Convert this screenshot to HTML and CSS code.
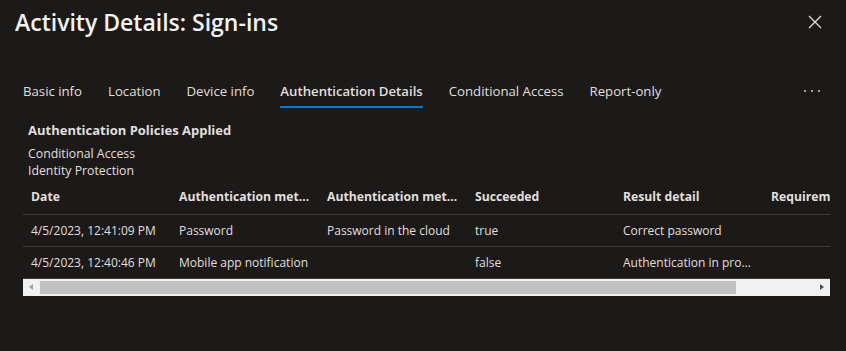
FILE: index.html
```html
<!DOCTYPE html>
<html lang="en">
<head>
<meta charset="UTF-8">
<title>Activity Details: Sign-ins</title>
<link rel="stylesheet" href="styles.css">
</head>
<body>
<div class="panel">
  <div class="panel-header">
    <h1 class="title">Activity Details: Sign-ins</h1>
    <button class="close" aria-label="Close">
      <svg width="14" height="14" viewBox="0 0 14 14"><path d="M1 1 L13 13 M13 1 L1 13" stroke="#e1dfdd" stroke-width="1.3" fill="none"/></svg>
    </button>
  </div>

  <div class="tabs">
    <span class="tab">Basic info</span>
    <span class="tab">Location</span>
    <span class="tab">Device info</span>
    <span class="tab active">Authentication Details</span>
    <span class="tab">Conditional Access</span>
    <span class="tab">Report-only</span>
    <span class="more"><i></i><i></i><i></i></span>
  </div>

  <div class="policies">
    <div class="policies-title">Authentication Policies Applied</div>
    <div>Conditional Access</div>
    <div>Identity Protection</div>
  </div>

  <div class="grid-wrap">
    <table class="grid">
      <thead>
        <tr>
          <th>Date</th>
          <th>Authentication method</th>
          <th>Authentication method detail</th>
          <th>Succeeded</th>
          <th>Result detail</th>
          <th>Requirement</th>
        </tr>
      </thead>
      <tbody>
        <tr>
          <td>4/5/2023, 12:41:09 PM</td>
          <td>Password</td>
          <td>Password in the cloud</td>
          <td>true</td>
          <td>Correct password</td>
          <td></td>
        </tr>
        <tr>
          <td>4/5/2023, 12:40:46 PM</td>
          <td>Mobile app notification</td>
          <td></td>
          <td>false</td>
          <td>Authentication in progress</td>
          <td></td>
        </tr>
      </tbody>
    </table>
    <div class="hscroll">
      <span class="arrow left"></span>
      <span class="thumb"></span>
      <span class="arrow right"></span>
    </div>
  </div>
</div>
</body>
</html>
```

FILE: styles.css
```css
html, body {
  margin: 0;
  height: 100%;
  background-color: #1b1a19;
}
body {
  font-family: "Open Sans", "Noto Sans", sans-serif;
  color: #e1dfdd;
  font-size: 12.3px;
}
.panel-header {
  display: flex;
  align-items: center;
  justify-content: space-between;
  height: 44px;
  padding: 0 24px 0 15px;
}
.title {
  margin: 0;
  font-size: 23px;
  font-weight: 600;
  color: #f3f2f1;
  line-height: 42px;
}
.close {
  background: none;
  border: 0;
  padding: 0;
  width: 14px;
  height: 14px;
  display: flex;
}
.tabs {
  display: flex;
  align-items: flex-start;
  gap: 26px;
  margin-top: 28px;
  padding: 0 23px;
}
.tab {
  font-size: 13.2px;
  line-height: 20px;
  padding: 9px 0 5px;
  border-bottom: 2px solid transparent;
}
.tab.active {
  font-weight: 600;
  border-bottom-color: #0078d4;
}
.more {
  margin-left: auto;
  display: flex;
  gap: 5px;
  padding-top: 18px;
  margin-right: 3px;
}
.more i {
  width: 2px;
  height: 2px;
  background-color: #a19f9d;
}
.policies {
  margin-top: 13px;
  padding: 0 28px;
  line-height: 17px;
}
.policies-title {
  font-weight: 700;
  font-size: 13px;
  line-height: 18px;
  margin-bottom: 6px;
}
.grid-wrap {
  margin: 0 16px 0 23px;
  overflow: hidden;
}
.grid {
  border-collapse: collapse;
  table-layout: fixed;
  width: 888px;
}
.grid th, .grid td {
  width: 148px;
  max-width: 148px;
  padding: 0 8px;
  text-align: left;
  white-space: nowrap;
  overflow: hidden;
  text-overflow: ellipsis;
  box-sizing: border-box;
  border-bottom: 1px solid #3b3a39;
}
.grid th {
  font-weight: 700;
  font-size: 12.2px;
  height: 35px;
}
.grid td {
  font-size: 12px;
  height: 32px;
}
.hscroll {
  position: relative;
  height: 17px;
  background-color: #f1f1f1;
}
.thumb {
  position: absolute;
  left: 17px;
  top: 2px;
  width: 696px;
  height: 13px;
  background-color: #c1c1c1;
}
.arrow {
  position: absolute;
  top: 5px;
  width: 0;
  height: 0;
  border-top: 3.5px solid transparent;
  border-bottom: 3.5px solid transparent;
}
.arrow.left {
  left: 6px;
  border-right: 4px solid #a3a3a3;
}
.arrow.right {
  right: 6px;
  border-left: 4px solid #505050;
}
```
